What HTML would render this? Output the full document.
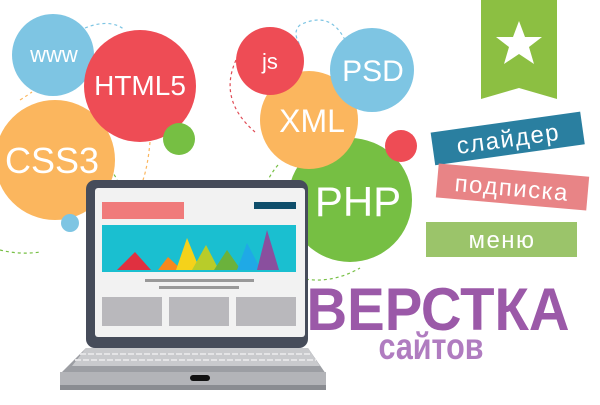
<!DOCTYPE html>
<html><head><meta charset="utf-8"><style>
body{margin:0;width:600px;height:400px;overflow:hidden;background:#fff;font-family:"Liberation Sans",sans-serif}
</style></head><body>
<svg width="600" height="400" viewBox="0 0 600 400" xmlns="http://www.w3.org/2000/svg" font-family="Liberation Sans, sans-serif">
<g fill="none" stroke-width="1.2" stroke-dasharray="3,3">
<path d="M85 28 Q110 18 125 30" stroke="#7ec5e3"/>
<path d="M345 40 Q330 10 300 25 Q292 32 300 45" stroke="#7ec5e3"/>
<path d="M236 60 Q218 100 255 132" stroke="#e04b55"/>
<path d="M20 100 Q28 95 32 92" stroke="#fbb65e"/>
<path d="M150 142 Q148 165 143 180" stroke="#fbb65e"/>
<path d="M110 170 Q118 178 118 185" stroke="#76bf43"/>
<path d="M0 250 Q20 255 40 252" stroke="#76bf43"/>
<path d="M278 165 Q272 172 268 180" stroke="#76bf43"/>
<path d="M300 278 Q330 285 360 268" stroke="#76bf43"/>
</g>
<circle cx="53" cy="55" r="41" fill="#7ec5e3"/>
<circle cx="55" cy="160" r="60" fill="#fbb65e"/>
<circle cx="140" cy="86" r="56" fill="#ee4c55"/>
<circle cx="179" cy="139" r="16" fill="#76bf43"/>
<circle cx="70" cy="223" r="9" fill="#7ec5e3"/>
<circle cx="350" cy="200" r="62" fill="#76bf43"/>
<circle cx="309" cy="120" r="49" fill="#fbb65e"/>
<circle cx="270" cy="61" r="34" fill="#ee4c55"/>
<circle cx="372" cy="70" r="42" fill="#7ec5e3"/>
<circle cx="401" cy="146" r="16" fill="#ee4c55"/>
<g fill="#fff" text-anchor="middle">
<text x="54" y="62" font-size="22">www</text>
<text x="140" y="95" font-size="28">HTML5</text>
<text x="52" y="173" font-size="36">CSS3</text>
<text x="270" y="69" font-size="22">js</text>
<text x="312" y="132" font-size="32">XML</text>
<text x="373" y="81" font-size="30">PSD</text>
<text x="358" y="216" font-size="42">PHP</text>
</g>
<path d="M481 0H557V99L519 88L481 99Z" fill="#8cbf42"/>
<path d="M519 21L525 37L542 37L529 47L534 64L519 54L504 64L509 47L496 37L513 37Z" fill="#fff"/>
<g transform="rotate(-8 507 137)"><rect x="432" y="122" width="151" height="33" fill="#2a7fa0"/><text x="508" y="147" font-size="24" letter-spacing="1.5" fill="#fff" text-anchor="middle">слайдер</text></g>
<g transform="rotate(5 512 187)"><rect x="437" y="170" width="151" height="34" fill="#e88486"/><text x="512" y="196" font-size="24" letter-spacing="1.5" fill="#fff" text-anchor="middle">подписка</text></g>
<rect x="426" y="222" width="151" height="35" fill="#9bc46a"/><text x="502" y="248" font-size="24" letter-spacing="1.5" fill="#fff" text-anchor="middle">меню</text>
<path d="M86 348H308L326 374V386Q326 390 320 390H66Q60 390 60 386V374Z" fill="#9c9ea3"/>
<path d="M86 348H308L320 366H72Z" fill="#c9cacd"/>
<g stroke="#e4e4e6" stroke-width="2" stroke-dasharray="6,2"><line x1="80" y1="354" x2="312" y2="354"/><line x1="75" y1="360" x2="316" y2="360"/></g>
<rect x="60" y="372" width="266" height="16" fill="#b3b4b8"/>
<rect x="60" y="385" width="266" height="5" fill="#8a8c91"/>
<rect x="190" y="375" width="20" height="6" rx="3" fill="#111"/>
<rect x="86" y="180" width="222" height="168" rx="9" fill="#464c5a"/>
<rect x="95" y="188" width="210" height="149" rx="3" fill="#f2f2f2"/>
<rect x="102" y="202" width="82" height="17" fill="#f07b7b"/>
<rect x="254" y="202" width="42" height="7" fill="#0f4e6b"/>
<rect x="102" y="225" width="194" height="47" fill="#1abfd0"/>
<path d="M117 270L135 252L151 270Z" fill="#e03040"/>
<path d="M158 270L168 257L182 270Z" fill="#f7881e"/>
<path d="M176 270L187 238L200 270Z" fill="#f5d21a"/>
<path d="M192 270L206 245L219 270Z" fill="#b8cc2a"/>
<path d="M214 270L227 250L241 270Z" fill="#6bb23c"/>
<path d="M237 270L247 243L261 270Z" fill="#1fa9e6"/>
<path d="M257 270L267 230L279 270Z" fill="#8a4f9e"/>
<rect x="145" y="279" width="109" height="3" fill="#999"/>
<rect x="159" y="286" width="80" height="3" fill="#999"/>
<rect x="102" y="297" width="60" height="29" fill="#b9b8bc"/>
<rect x="169" y="297" width="60" height="29" fill="#b9b8bc"/>
<rect x="236" y="297" width="60" height="29" fill="#b9b8bc"/>
<text x="438" y="330" font-size="60" font-weight="bold" fill="#9b59a8" text-anchor="middle" textLength="263" lengthAdjust="spacingAndGlyphs">ВЕРСТКА</text>
<text x="431" y="359" font-size="37" font-weight="bold" fill="#b07cc0" text-anchor="middle" textLength="105" lengthAdjust="spacingAndGlyphs">сайтов</text>
</svg>
</body></html>
